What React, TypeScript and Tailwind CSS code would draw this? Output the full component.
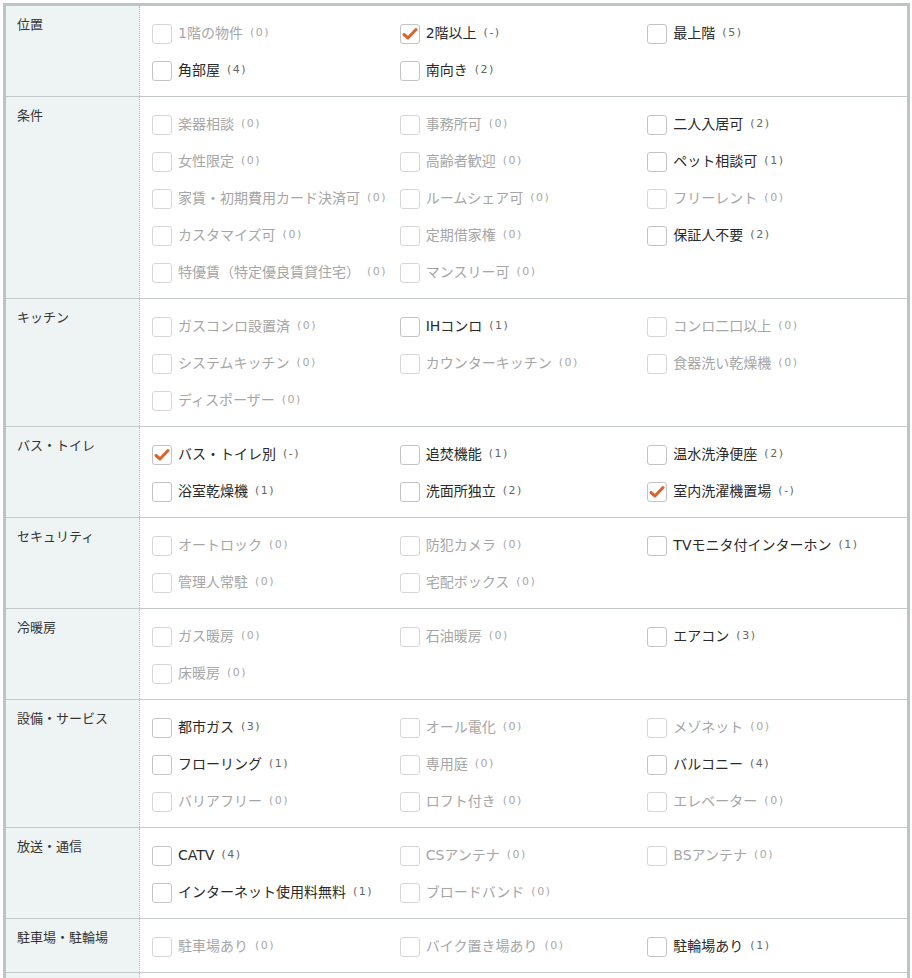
import React from 'react';

type Item = { label: string; count: string; disabled?: boolean; checked?: boolean };
type Group = { title: string; items: Item[] };

const groups: Group[] = [
  {
    title: '位置',
    items: [
      { label: '1階の物件', count: '0', disabled: true },
      { label: '2階以上', count: '-', checked: true },
      { label: '最上階', count: '5' },
      { label: '角部屋', count: '4' },
      { label: '南向き', count: '2' },
    ],
  },
  {
    title: '条件',
    items: [
      { label: '楽器相談', count: '0', disabled: true },
      { label: '事務所可', count: '0', disabled: true },
      { label: '二人入居可', count: '2' },
      { label: '女性限定', count: '0', disabled: true },
      { label: '高齢者歓迎', count: '0', disabled: true },
      { label: 'ペット相談可', count: '1' },
      { label: '家賃・初期費用カード決済可', count: '0', disabled: true },
      { label: 'ルームシェア可', count: '0', disabled: true },
      { label: 'フリーレント', count: '0', disabled: true },
      { label: 'カスタマイズ可', count: '0', disabled: true },
      { label: '定期借家権', count: '0', disabled: true },
      { label: '保証人不要', count: '2' },
      { label: '特優賃（特定優良賃貸住宅）', count: '0', disabled: true },
      { label: 'マンスリー可', count: '0', disabled: true },
    ],
  },
  {
    title: 'キッチン',
    items: [
      { label: 'ガスコンロ設置済', count: '0', disabled: true },
      { label: 'IHコンロ', count: '1' },
      { label: 'コンロ二口以上', count: '0', disabled: true },
      { label: 'システムキッチン', count: '0', disabled: true },
      { label: 'カウンターキッチン', count: '0', disabled: true },
      { label: '食器洗い乾燥機', count: '0', disabled: true },
      { label: 'ディスポーザー', count: '0', disabled: true },
    ],
  },
  {
    title: 'バス・トイレ',
    items: [
      { label: 'バス・トイレ別', count: '-', checked: true },
      { label: '追焚機能', count: '1' },
      { label: '温水洗浄便座', count: '2' },
      { label: '浴室乾燥機', count: '1' },
      { label: '洗面所独立', count: '2' },
      { label: '室内洗濯機置場', count: '-', checked: true },
    ],
  },
  {
    title: 'セキュリティ',
    items: [
      { label: 'オートロック', count: '0', disabled: true },
      { label: '防犯カメラ', count: '0', disabled: true },
      { label: 'TVモニタ付インターホン', count: '1' },
      { label: '管理人常駐', count: '0', disabled: true },
      { label: '宅配ボックス', count: '0', disabled: true },
    ],
  },
  {
    title: '冷暖房',
    items: [
      { label: 'ガス暖房', count: '0', disabled: true },
      { label: '石油暖房', count: '0', disabled: true },
      { label: 'エアコン', count: '3' },
      { label: '床暖房', count: '0', disabled: true },
    ],
  },
  {
    title: '設備・サービス',
    items: [
      { label: '都市ガス', count: '3' },
      { label: 'オール電化', count: '0', disabled: true },
      { label: 'メゾネット', count: '0', disabled: true },
      { label: 'フローリング', count: '1' },
      { label: '専用庭', count: '0', disabled: true },
      { label: 'バルコニー', count: '4' },
      { label: 'バリアフリー', count: '0', disabled: true },
      { label: 'ロフト付き', count: '0', disabled: true },
      { label: 'エレベーター', count: '0', disabled: true },
    ],
  },
  {
    title: '放送・通信',
    items: [
      { label: 'CATV', count: '4' },
      { label: 'CSアンテナ', count: '0', disabled: true },
      { label: 'BSアンテナ', count: '0', disabled: true },
      { label: 'インターネット使用料無料', count: '1' },
      { label: 'ブロードバンド', count: '0', disabled: true },
    ],
  },
  {
    title: '駐車場・駐輪場',
    items: [
      { label: '駐車場あり', count: '0', disabled: true },
      { label: 'バイク置き場あり', count: '0', disabled: true },
      { label: '駐輪場あり', count: '1' },
    ],
  },
];

function Checkbox({ checked, disabled }: { checked?: boolean; disabled?: boolean }) {
  return (
    <span
      className={`flex h-5 w-5 shrink-0 items-center justify-center rounded-[3px] border bg-white ${
        disabled ? 'border-[#d6d6d6]' : 'border-[#c4c4c4]'
      }`}
    >
      {checked && (
        <svg width="16" height="14" viewBox="0 0 16 14">
          <path d="M2 7.5 L6 11 L14 2.5" fill="none" stroke="#d7652c" strokeWidth="3" strokeLinecap="round" strokeLinejoin="round" />
        </svg>
      )}
    </span>
  );
}

function Option({ item }: { item: Item }) {
  return (
    <label className="flex h-[37px] items-center whitespace-nowrap">
      <Checkbox checked={item.checked} disabled={item.disabled} />
      <span className={`ml-[6px] text-[14px] ${item.disabled ? 'text-[#a6a6a6]' : 'text-[#2a2a2a]'}`}>
        {item.label}
      </span>
      <span className={`ml-[7px] text-[11px] tracking-[1.5px] ${item.disabled ? 'text-[#a8a8a8]' : 'text-[#666]'}`}>
        ({item.count})
      </span>
    </label>
  );
}

export default function App() {
  return (
    <div
      className="h-[978px] overflow-hidden bg-white pt-[3px] pl-[3px] pr-[2px]"
      style={{ fontFamily: '"DejaVu Sans", "Noto Sans CJK JP", sans-serif' }}
    >
      <div className="border-x-[3px] border-t-[3px] border-[#bcc4c4]">
        {groups.map((g) => (
          <div key={g.title} className="flex border-b border-[#c3c8c8]">
            <div className="w-[134px] shrink-0 bg-[#eef3f4] px-[11px] pt-[9px] text-[13px] leading-[20px] text-[#333] border-r border-dotted border-[#bdbdbd]">
              {g.title}
            </div>
            <div className="grid flex-1 grid-cols-3 px-3 pt-[9px] pb-[7px]">
              {g.items.map((it) => (
                <Option key={it.label} item={it} />
              ))}
            </div>
          </div>
        ))}
        {/* next section starts just below the visible area */}
        <div className="flex h-[60px]">
          <div className="w-[134px] shrink-0 bg-[#eef3f4] border-r border-dotted border-[#bdbdbd]" />
          <div className="flex-1" />
        </div>
      </div>
    </div>
  );
}
